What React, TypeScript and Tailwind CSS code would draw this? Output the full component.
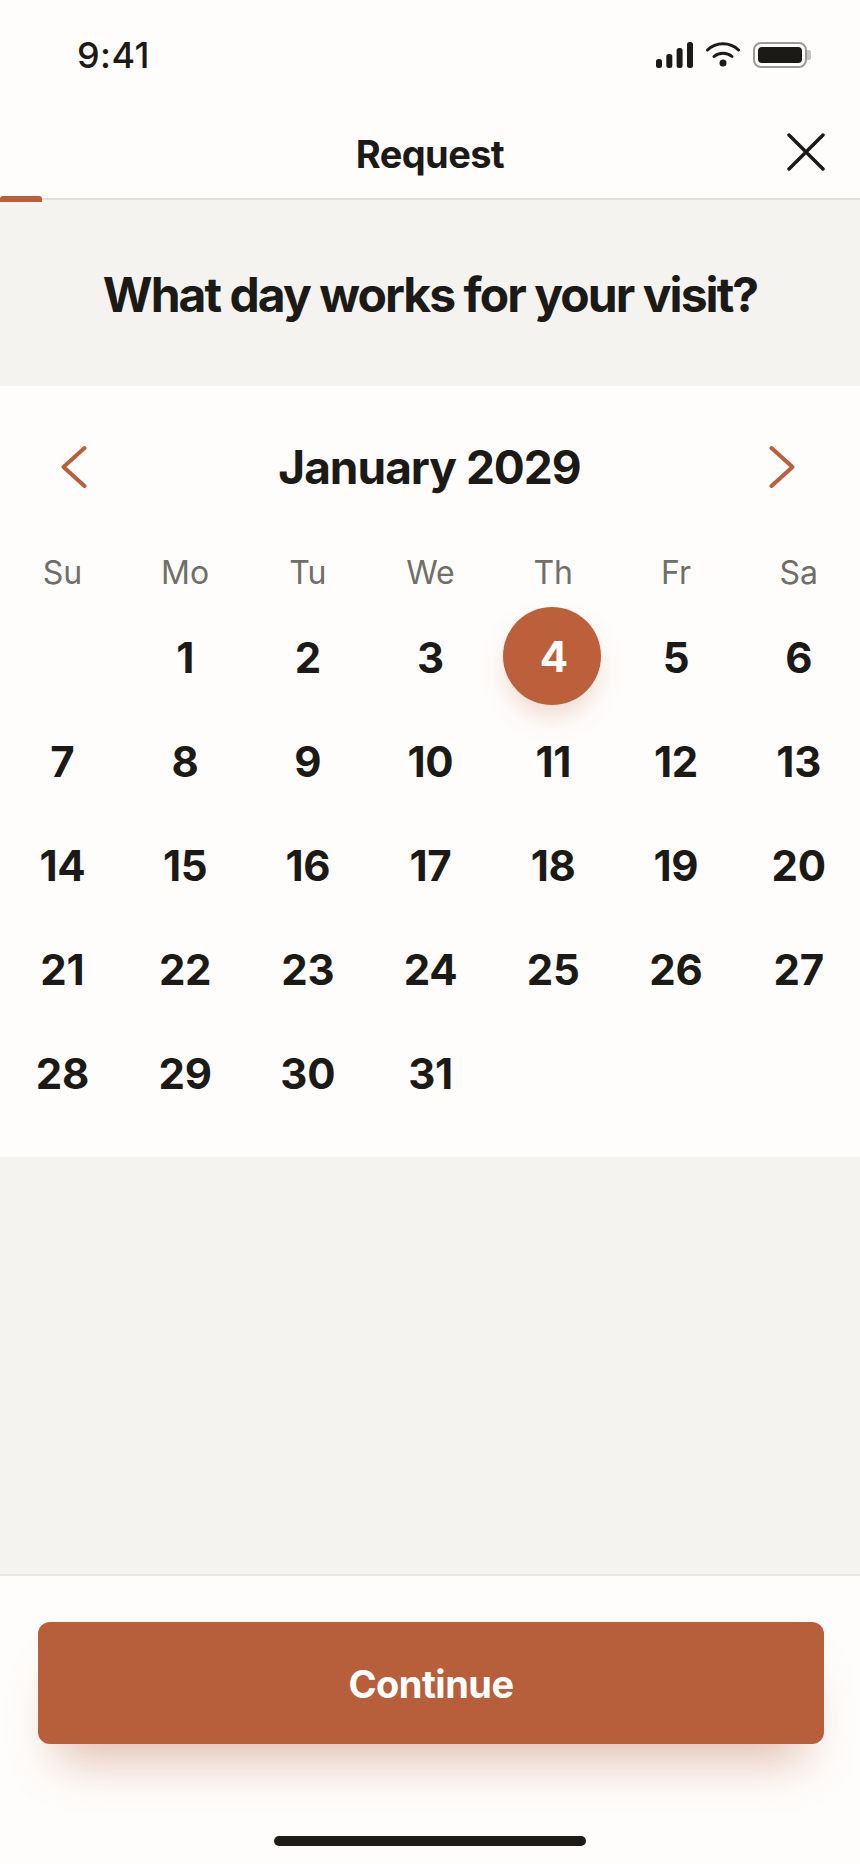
const weekdays = ['Su', 'Mo', 'Tu', 'We', 'Th', 'Fr', 'Sa'];

// January 2029 starts on a Monday, so the first cell stays blank
const days: (number | null)[] = [null, ...Array.from({ length: 31 }, (_, i) => i + 1)];

function StatusIcons() {
    return (
        <div className="flex items-center">
            <svg width="37" height="26" viewBox="0 0 37 26" className="block">
                <rect x="0" y="17" width="6" height="9" rx="2.5" fill="#1c1a17" />
                <rect x="10.3" y="12" width="6" height="14" rx="2.5" fill="#1c1a17" />
                <rect x="20.6" y="6" width="6" height="20" rx="2.5" fill="#1c1a17" />
                <rect x="31" y="0" width="6" height="26" rx="2.5" fill="#1c1a17" />
            </svg>
            <svg width="34" height="26" viewBox="0 0 34 26" className="block ml-[13px]">
                <path d="M1.5 8C10 -0.2 24 -0.2 32.5 8" fill="none" stroke="#1c1a17" strokeWidth="3" strokeLinecap="round" />
                <path d="M8 14.5C13 10 21 10 26 14.5" fill="none" stroke="#1c1a17" strokeWidth="3" strokeLinecap="round" />
                <circle cx="17" cy="21" r="3.5" fill="#1c1a17" />
            </svg>
            <div className="flex items-center ml-[13px]">
                <div className="w-[54px] h-[26px] rounded-[8px] border-2 border-[#9b9a97] p-[3px]">
                    <div className="w-full h-full rounded-[4px] bg-[#1c1a17]" />
                </div>
                <div className="w-[4px] h-[10px] rounded-r-[2px] bg-[#c4c3c0]" />
            </div>
        </div>
    );
}

function Chevron({ direction }: { direction: 'left' | 'right' }) {
    return (
        <svg width="26" height="44" viewBox="0 0 26 44" className="block">
            <path
                d={direction === 'left' ? 'M23.5 3L2.5 22L23.5 41' : 'M2.5 3L23.5 22L2.5 41'}
                fill="none"
                stroke="#b9603a"
                strokeWidth="4"
                strokeLinecap="round"
                strokeLinejoin="round"
            />
        </svg>
    );
}

export default function App() {
    return (
        <div className="w-[860px] h-[1864px] flex flex-col bg-[#fefdfb] text-[#1c1a17] font-['Inter',sans-serif] overflow-hidden">
            {/* Status bar */}
            <div className="h-[110px] shrink-0 flex items-center justify-between pl-[77px] pr-[49px]">
                <span className="text-[36px] leading-none font-medium tracking-[0.4px]">9:41</span>
                <StatusIcons />
            </div>

            {/* Header */}
            <div className="relative h-[90px] shrink-0 border-b-2 border-[#e0dfdc] flex items-center justify-center">
                <span className="text-[38px] leading-none font-bold tracking-[-0.6px]">Request</span>
                <button className="absolute right-[35px] top-[23px]">
                    <svg width="38" height="38" viewBox="0 0 38 38" className="block">
                        <path d="M2 2L36 36M36 2L2 36" fill="none" stroke="#1c1a17" strokeWidth="3.5" strokeLinecap="round" />
                    </svg>
                </button>
                <div className="absolute left-0 bottom-[-4px] w-[42px] h-[6px] rounded-t-[3px] bg-[#b9603a]" />
            </div>

            {/* Question */}
            <div className="h-[186px] shrink-0 bg-[#f4f3f0] flex items-center justify-center pt-[3px]">
                <h1 className="text-[48px] leading-none font-bold tracking-[-1.95px]">What day works for your visit?</h1>
            </div>

            {/* Calendar */}
            <div className="shrink-0 pb-[32px]">
                <div className="h-[162px] flex items-center justify-between pl-[61px] pr-[65px]">
                    <Chevron direction="left" />
                    <span className="text-[46px] leading-none font-bold tracking-[-1px] ml-[3px]">January 2029</span>
                    <Chevron direction="right" />
                </div>

                <div className="grid grid-cols-7 h-[48px] pt-[1px] pl-[1px] items-center text-center text-[32px] leading-none text-[#6f6e6a]">
                    {weekdays.map((day) => (
                        <span key={day}>{day}</span>
                    ))}
                </div>

                <div className="grid grid-cols-7 auto-rows-[104px] mt-[9px] pl-[1px] text-[42px] leading-none font-bold tracking-[-0.3px]">
                    {days.map((day, i) => (
                        <div key={i} className="flex items-center justify-center">
                            {day === 4 ? (
                                <span className="w-[98px] h-[98px] pl-[3px] pt-[2px] rounded-full -translate-x-[1px] -translate-y-px bg-[#bb603a] text-white flex items-center justify-center shadow-[0_14px_28px_-6px_rgba(185,96,58,0.28)]">
                                    {day}
                                </span>
                            ) : (
                                <span className="pt-[2px]">{day}</span>
                            )}
                        </div>
                    ))}
                </div>
            </div>

            <div className="flex-1 bg-[#f4f3f0]" />

            {/* Footer */}
            <div className="h-[290px] shrink-0 border-t-2 border-[#e6e5e2] pt-[46px] pl-[38px] pr-[36px] flex flex-col">
                <button className="h-[122px] pt-[2px] rounded-[12px] bg-[#b75f3a] text-white text-[38px] font-bold tracking-[-0.5px] shadow-[0_36px_48px_-20px_rgba(183,95,58,0.4)]">
                    Continue
                </button>
                <div className="w-[312px] h-[10px] rounded-full bg-[#1f1c18] mt-[92px] ml-[236px]" />
            </div>
        </div>
    );
}
